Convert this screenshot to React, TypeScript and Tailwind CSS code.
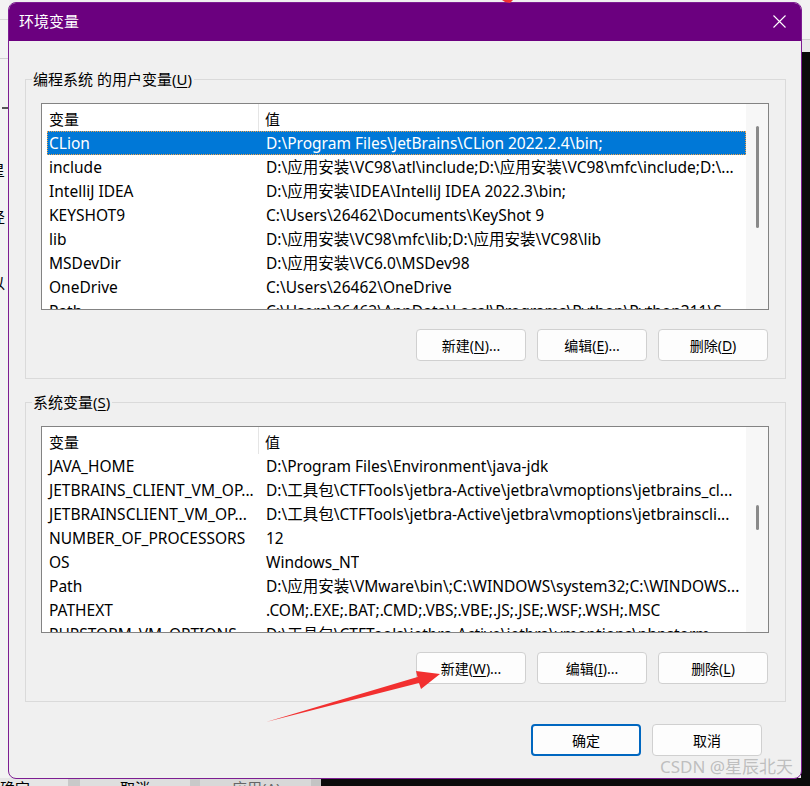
import React from 'react';

type Row = { name: string; value: string };

const userVars: Row[] = [
  { name: 'CLion', value: 'D:\\Program Files\\JetBrains\\CLion 2022.2.4\\bin;' },
  { name: 'include', value: 'D:\\应用安装\\VC98\\atl\\include;D:\\应用安装\\VC98\\mfc\\include;D:\\...' },
  { name: 'IntelliJ IDEA', value: 'D:\\应用安装\\IDEA\\IntelliJ IDEA 2022.3\\bin;' },
  { name: 'KEYSHOT9', value: 'C:\\Users\\26462\\Documents\\KeyShot 9' },
  { name: 'lib', value: 'D:\\应用安装\\VC98\\mfc\\lib;D:\\应用安装\\VC98\\lib' },
  { name: 'MSDevDir', value: 'D:\\应用安装\\VC6.0\\MSDev98' },
  { name: 'OneDrive', value: 'C:\\Users\\26462\\OneDrive' },
  { name: 'Path', value: 'C:\\Users\\26462\\AppData\\Local\\Programs\\Python\\Python311\\S...' },
];

const sysVars: Row[] = [
  { name: 'JAVA_HOME', value: 'D:\\Program Files\\Environment\\java-jdk' },
  { name: 'JETBRAINS_CLIENT_VM_OP...', value: 'D:\\工具包\\CTFTools\\jetbra-Active\\jetbra\\vmoptions\\jetbrains_cl...' },
  { name: 'JETBRAINSCLIENT_VM_OP...', value: 'D:\\工具包\\CTFTools\\jetbra-Active\\jetbra\\vmoptions\\jetbrainscli...' },
  { name: 'NUMBER_OF_PROCESSORS', value: '12' },
  { name: 'OS', value: 'Windows_NT' },
  { name: 'Path', value: 'D:\\应用安装\\VMware\\bin\\;C:\\WINDOWS\\system32;C:\\WINDOWS...' },
  { name: 'PATHEXT', value: '.COM;.EXE;.BAT;.CMD;.VBS;.VBE;.JS;.JSE;.WSF;.WSH;.MSC' },
  { name: 'PHPSTORM_VM_OPTIONS', value: 'D:\\工具包\\CTFTools\\jetbra-Active\\jetbra\\vmoptions\\phpstorm...' },
];

const VarList: React.FC<{ rows: Row[]; selected?: number; thumbTop: number; thumbH: number }> = ({ rows, selected, thumbTop, thumbH }) => (
  <div className="flex h-[207px] border border-[#838383] bg-white overflow-hidden">
    <div className="flex-1 flex flex-col min-w-0">
      <div className="flex h-[27px] shrink-0 items-center text-[15px] text-black">
        <div className="w-[217px] h-full pl-[7px] pt-[3px] flex items-center border-r border-[#e5e5e5]">变量</div>
        <div className="pl-[6px] pt-[3px]">值</div>
      </div>
      {rows.map((r, i) => (
        <div
          key={r.name + i}
          className={
            'ml-[5px] flex h-[24px] shrink-0 items-center pt-[1px] text-[15.5px] whitespace-nowrap ' +
            (i === selected ? 'bg-[#0078d7] text-white outline-1 outline-dotted outline-[#f0a34a] -outline-offset-1' : 'text-black')
          }
        >
          <div className="w-[212px] pl-[2px] overflow-hidden">{r.name}</div>
          <div className="pl-[7px] overflow-hidden">{r.value}</div>
        </div>
      ))}
    </div>
    <div className="w-[22px] shrink-0 bg-[#f7f7f7] flex justify-center">
      <div className="w-[3px] rounded-full bg-[#8a8a8a]" style={{ marginTop: thumbTop, height: thumbH }} />
    </div>
  </div>
);

const Btn: React.FC<{ pre: string; key2?: string; post?: string; primary?: boolean }> = ({ pre, key2, post, primary }) => (
  <div
    className={
      'w-[110px] h-[32px] rounded-[4px] bg-[#fdfdfd] flex items-center justify-center text-[14px] text-black ' +
      (primary ? 'border-2 border-[#0067c0]' : 'border border-[#d0d0d0]')
    }
  >
    {pre}
    {key2 && <span className="underline underline-offset-2">{key2}</span>}
    {post}
  </div>
);

const Group: React.FC<{ label: string; ukey: string; rows: Row[]; selected?: number; thumbTop: number; thumbH: number; btns: [string, string][]; className?: string }> = ({ label, ukey, rows, selected, thumbTop, thumbH, btns, className }) => (
  <fieldset className={'border border-[#dadada] pl-[15px] pr-[16px] pt-[14px] pb-[17px] ' + (className ?? '')}>
    <legend className="ml-[-9px] pl-[1px] pr-[2px] text-[15px] leading-[20px] text-black">
      {label}(<span className="underline underline-offset-2">{ukey}</span>)
    </legend>
    <VarList rows={rows} selected={selected} thumbTop={thumbTop} thumbH={thumbH} />
    <div className="mt-[19px] flex justify-end gap-[11px] pr-[1px]">
      {btns.map(([p, k], i) => (
        <Btn key={i} pre={p} key2={k} post={i < 2 ? ')...' : ')'} />
      ))}
    </div>
  </fieldset>
);

export default function App() {
  return (
    <div className="relative w-[810px] h-[786px] overflow-hidden bg-[#f0f0f0] font-['Noto_Sans','Noto_Sans_CJK_SC',sans-serif]">
      {/* window behind, left edge */}
      <div className="absolute left-0 top-0 w-[9px] h-[778px] bg-[#f3f3f3] overflow-hidden text-[15px] text-black">
        <div className="h-[20px] border-b border-[#d8d8d8]" />
        <div className="mt-[38px] h-[1px] bg-[#d0d0d0]" />
        <div className="mt-[48px] ml-[2px] w-[7px] h-[2px] bg-[#555]" />
        <div className="mt-[50px] -ml-[10px]">星</div>
        <div className="mt-[24px] -ml-[10px]">径</div>
        <div className="mt-[44px] -ml-[10px]">以</div>
      </div>
      {/* window behind, right edge */}
      <div className="absolute right-0 top-0 w-[9px] h-full flex flex-col">
        <div className="h-[40px] bg-[#f2f2f2] border-b border-[#cfcfcf]" />
        <div className="h-[12px] bg-[#e9e9e9]" />
        <div className="flex-1 bg-[#0b0b0b]" />
      </div>
      {/* buttons of the window behind, bottom strip */}
      <div className="absolute left-0 bottom-0 w-full h-[8px] flex overflow-hidden text-[15px] leading-[20px]">
        <div className="w-[68px] bg-[#e6e6e6]">确定</div>
        <div className="w-[12px] bg-[#c9c9c9]" />
        <div className="w-[110px] bg-[#dedede] pl-[40px]">取消</div>
        <div className="w-[10px] bg-[#c9c9c9]" />
        <div className="w-[111px] bg-[#d8d8d8] pl-[32px] text-[#666]">应用(A)</div>
        <div className="w-[10px] bg-[#c4c4c4]" />
        <div className="flex-1 bg-[#0b0b0b]" />
      </div>

      {/* dialog */}
      <div className="absolute left-[8px] top-[2px] w-[794px] h-[777px] rounded-[8px] border border-[#7d1d92] bg-[#f0f0f0] overflow-hidden flex flex-col">
        <div className="h-[38px] shrink-0 bg-[#6b007f] flex items-center justify-between pl-[10px] pr-[15px] pb-[1px]">
          <span className="text-white text-[15px]">环境变量</span>
          <svg width="13" height="13" viewBox="0 0 13 13">
            <path d="M0.5 0.5 L12.5 12.5 M12.5 0.5 L0.5 12.5" stroke="#fff" strokeWidth="1.1" />
          </svg>
        </div>
        <div className="flex-1 flex flex-col pl-[16px] pr-[15px] pt-[28px]">
          <Group
            label="编程系统 的用户变量"
            ukey="U"
            rows={userVars}
            selected={0}
            thumbTop={22}
            thumbH={102}
            btns={[['新建(', 'N'], ['编辑(', 'E'], ['删除(', 'D']]}
          />
          <Group
            className="mt-[13px]"
            label="系统变量"
            ukey="S"
            rows={sysVars}
            thumbTop={78}
            thumbH={25}
            btns={[['新建(', 'W'], ['编辑(', 'I'], ['删除(', 'L']]}
          />
          <div className="mt-[22px] flex justify-end gap-[11px] pr-[24px]">
            <Btn pre="确定" primary />
            <Btn pre="取消" />
          </div>
        </div>
      </div>

      {/* watermark */}
      <div className="absolute left-[660px] top-[754px] text-[17px] text-[#b8b8b8]/90 whitespace-nowrap w-[141px] overflow-hidden">
        CSDN @星辰北天
      </div>

      {/* red annotation arrow */}
      <svg className="absolute left-0 top-0 pointer-events-none" width="810" height="786">
        <polygon points="266,722 419,683 421,689 440,674 416,671 417.5,677" fill="#f23030" />
        <polygon points="502,0 513,0 510,3 505,2" fill="#f23030" />
      </svg>
    </div>
  );
}
